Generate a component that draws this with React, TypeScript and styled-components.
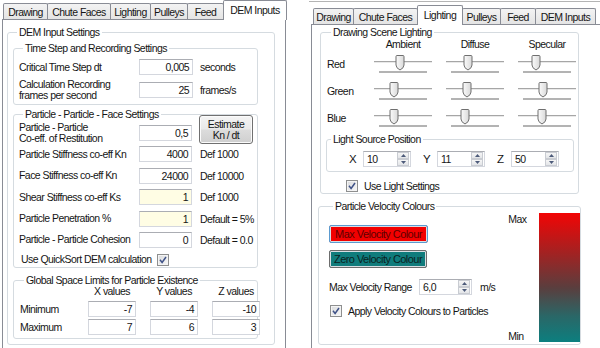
import React from 'react';
import styled, { createGlobalStyle } from 'styled-components';

const GlobalStyle = createGlobalStyle`
  html, body {
    margin: 0;
    padding: 0;
    background: #fff;
  }
  body {
    font-family: "Liberation Sans", Arial, sans-serif;
    font-size: 10.5px;
    letter-spacing: -0.55px;
    color: #151515;
  }
  * {
    box-sizing: border-box;
  }
`;

const Screen = styled.div`
  display: flex;
  align-items: flex-start;
  width: 600px;
  height: 348px;
  overflow: hidden;
  background: #fff;
`;

const LeftPane = styled.div`
  display: flex;
  flex-direction: column;
  width: 284px;
  height: 360px;
  margin-left: 2px;
`;

const RightPane = styled.div`
  display: flex;
  flex-direction: column;
  flex-shrink: 0;
  width: 294px;
  height: 360px;
  margin-top: 1px;
  margin-left: 23px;
  padding-left: 2px;
  border-top: 1px solid #b4b4b4;
`;

const TabStrip = styled.div<{ $h: number; $lead: number }>`
  display: flex;
  align-items: flex-end;
  height: ${p => p.$h}px;
  padding-left: ${p => p.$lead}px;
`;

const Tab = styled.div<{ $w: number; $active?: boolean }>`
  position: relative;
  z-index: ${p => (p.$active ? 1 : 0)};
  display: flex;
  align-items: center;
  justify-content: center;
  width: ${p => p.$w}px;
  height: ${p => (p.$active ? 20 : 16)}px;
  margin-right: -1px;
  margin-bottom: ${p => (p.$active ? -1 : 0)}px;
  padding-bottom: ${p => (p.$active ? 1 : 0)}px;
  border: 1px solid #898c95;
  border-bottom: none;
  border-radius: 2px 2px 0 0;
  background: ${p => (p.$active ? '#fff' : 'linear-gradient(#f3f3f3, #e4e4e4)')};
  white-space: nowrap;
`;

const TabPage = styled.div<{ $pad: string }>`
  flex: 1;
  padding: ${p => p.$pad};
  border: 1px solid #898c95;
  background: #fff;
`;

const Group = styled.fieldset<{ $w: number; $pad: string; $mt?: number; $ml?: number }>`
  width: ${p => p.$w}px;
  min-width: 0;
  margin: ${p => p.$mt ?? 0}px 0 0 ${p => p.$ml ?? 0}px;
  padding: ${p => p.$pad};
  border: 1px solid #d5dbe0;
  border-radius: 3px;
`;

const Legend = styled.legend`
  height: 12px;
  margin-left: 4px;
  padding: 0 2px;
  line-height: 12px;
  white-space: nowrap;
`;

const Stack = styled.div<{ $gap: number }>`
  display: flex;
  flex-direction: column;
  gap: ${p => p.$gap}px;
`;

const FieldRow = styled.div<{ $h: number; $label: number }>`
  display: grid;
  grid-template-columns: ${p => p.$label}px auto auto;
  align-items: center;
  justify-content: start;
  height: ${p => p.$h}px;
`;

const Label = styled.div<{ $indent?: number }>`
  padding-left: ${p => p.$indent ?? 0}px;
  line-height: 11px;
  white-space: nowrap;
`;

const Unit = styled.div<{ $gap: number }>`
  margin-left: ${p => p.$gap}px;
  white-space: nowrap;
`;

const Field = styled.div<{ $w: number; $tint?: boolean }>`
  display: flex;
  align-items: center;
  justify-content: flex-end;
  width: ${p => p.$w}px;
  height: 16px;
  padding-right: 3px;
  border: 1px solid #d4d7de;
  border-top-color: #abadb3;
  background: ${p => (p.$tint ? '#fffde4' : '#fff')};
`;

const PushButton = styled.div`
  display: flex;
  flex-direction: column;
  align-items: center;
  justify-content: center;
  align-self: start;
  width: 54px;
  height: 29px;
  margin: -6px 0 0 7px;
  border: 1px solid #707070;
  border-radius: 3px;
  background: linear-gradient(#f4f4f4 0%, #e9e9e9 48%, #dcdcdc 52%, #cfcfcf 100%);
  line-height: 11px;
  box-shadow: inset 0 0 0 1px #fbfbfb;
`;

const CheckRow = styled.div<{ $label: number }>`
  display: grid;
  grid-template-columns: ${p => p.$label}px auto;
  align-items: center;
  height: 13px;
`;

const CheckLine = styled.div<{ $indent: number; $mt: number }>`
  display: flex;
  align-items: center;
  gap: 6px;
  height: 13px;
  margin-top: ${p => p.$mt}px;
  padding-left: ${p => p.$indent}px;
  white-space: nowrap;
`;

const Box = styled.span`
  display: inline-flex;
  align-items: center;
  justify-content: center;
  width: 12px;
  height: 12px;
  border: 1px solid #8e8f8f;
  background: linear-gradient(135deg, #d9dadc, #f8f8f8);
  box-shadow: inset 0 0 0 1px #f4f4f4;
`;

const LimitsGrid = styled.div`
  display: grid;
  grid-template-columns: 54px 48px 48px 48px;
  grid-template-rows: 12px 16px 16px;
  column-gap: 14px;
  row-gap: 2px;
  align-items: center;
`;

const ColHead = styled.div`
  text-align: center;
  line-height: 12px;
  margin-bottom: 4px;
`;

const LightGrid = styled.div`
  display: grid;
  grid-template-columns: 33px 58px 58px 58px;
  grid-template-rows: 11px 21px 21px 21px;
  column-gap: 14px;
  row-gap: 6px;
  align-items: center;
`;

const LightHead = styled.div`
  line-height: 12px;
  text-align: center;
`;

const RowName = styled.div`
  margin-top: -3px;
`;

const AxisRow = styled.div`
  display: flex;
  align-items: center;
  gap: 12px;
  height: 16px;
  padding-left: 22px;
`;

const Axis = styled.div`
  display: flex;
  align-items: center;
`;

const AxisName = styled.span`
  width: 8px;
  margin-right: 6px;
  font-size: 11.5px;
`;

const Spin = styled.div<{ $w: number }>`
  display: flex;
  width: ${p => p.$w}px;
  height: 16px;
  border: 1px solid #d4d7de;
  border-top-color: #abadb3;
  background: #fff;
`;

const SpinText = styled.div`
  flex: 1;
  padding-left: 3px;
  line-height: 14px;
`;

const SpinButtons = styled.div`
  display: flex;
  flex-direction: column;
  width: 12px;
  margin: 0 1px 0 0;
`;

const SpinHalf = styled.div`
  display: flex;
  align-items: center;
  justify-content: center;
  flex: 1;
  border: 1px solid #c9ccd2;
  background: linear-gradient(#f6f6f6, #e3e5e8);
`;

const VelocityBody = styled.div`
  display: grid;
  grid-template-columns: 1fr auto 41px;
  column-gap: 13px;
  height: 130px;
`;

const VelocityControls = styled.div`
  display: flex;
  flex-direction: column;
  padding-top: 13px;
`;

const ColourButton = styled.div<{ $fill: string; $ink: string; $ring: string; $mt: number; $w: number }>`
  display: flex;
  align-items: center;
  justify-content: center;
  width: ${p => p.$w}px;
  height: 18px;
  margin-top: ${p => p.$mt}px;
  border: 1px solid ${p => p.$ring};
  border-radius: 2px;
  background: ${p => p.$fill};
  color: ${p => p.$ink};
  box-shadow: inset 0 0 0 1px #d8dde2;
  font-size: 11px;
  white-space: nowrap;
`;

const RangeRow = styled.div`
  display: flex;
  align-items: center;
  height: 16px;
  margin-top: 11px;
  white-space: nowrap;
`;

const RangeLabel = styled.div`
  width: 90px;
`;

const ScaleLabels = styled.div`
  display: flex;
  flex-direction: column;
  justify-content: space-between;
  padding: 1px 0 0;
  line-height: 12px;
`;

const ScaleBar = styled.div`
  margin-top: 1px;
  background: linear-gradient(#f20505 0%, #a52121 30%, #5a3e3e 58%, #2a6767 80%, #0c7f7f 100%);
`;

const Check = () => (
  <Box>
    <svg width="8" height="8" viewBox="0 0 8 8">
      <path d="M1 3.8 L3.1 6.4 L7 1" stroke="#3f5287" strokeWidth="1.5" fill="none" />
    </svg>
  </Box>
);

const Arrow = ({ up }: { up?: boolean }) => (
  <svg width="5" height="3" viewBox="0 0 5 3">
    <path d={up ? 'M0 3 L2.5 0 L5 3 Z' : 'M0 0 L2.5 3 L5 0 Z'} fill="#4d5b7a" />
  </svg>
);

const SpinBox = ({ value, w }: { value: string; w: number }) => (
  <Spin $w={w}>
    <SpinText>{value}</SpinText>
    <SpinButtons>
      <SpinHalf>
        <Arrow up />
      </SpinHalf>
      <SpinHalf>
        <Arrow />
      </SpinHalf>
    </SpinButtons>
  </Spin>
);

const Slider = ({ at }: { at: number }) => (
  <svg width="58" height="21" viewBox="0 0 58 21">
    <defs>
      <linearGradient id="thumb" x1="0" y1="0" x2="1" y2="0">
        <stop offset="0" stopColor="#fbfbfb" />
        <stop offset="1" stopColor="#d9d9d9" />
      </linearGradient>
    </defs>
    <line x1="0" y1="6.5" x2="58" y2="6.5" stroke="#a6a6a6" />
    <line x1="0" y1="7.5" x2="58" y2="7.5" stroke="#e9e9e9" />
    <rect x="5" y="16" width="48" height="2" fill="#b3b3b3" />
    <path
      transform={`translate(${at - 4.5} 0)`}
      d="M0.5 1.5 Q0.5 0.5 1.5 0.5 H7.5 Q8.5 0.5 8.5 1.5 V10 Q8.5 13 4.5 15 Q0.5 13 0.5 10 Z"
      fill="url(#thumb)"
      stroke="#6f6f6f"
    />
  </svg>
);

const leftTabs: [string, number][] = [
  ['Drawing', 45],
  ['Chute Faces', 64],
  ['Lighting', 41],
  ['Pulleys', 38],
  ['Feed', 37],
  ['DEM Inputs', 64],
];

const rightTabs: [string, number][] = [
  ['Drawing', 41],
  ['Chute Faces', 65],
  ['Lighting', 46],
  ['Pulleys', 39],
  ['Feed', 36],
  ['DEM Inputs', 61],
];

const particleRows = [
  { label: 'Particle Stiffness co-eff Kn', value: '4000', note: 'Def 1000' },
  { label: 'Face Stiffness co-eff Kn', value: '24000', note: 'Def 10000' },
  { label: 'Shear Stiffness co-eff Ks', value: '1', note: 'Def 1000', tint: true },
  { label: 'Particle Penetration %', value: '1', note: 'Default = 5%', tint: true },
  { label: 'Particle - Particle Cohesion', value: '0', note: 'Default = 0.0' },
];

const lightRows = [
  { name: 'Red', at: [26, 22, 18] },
  { name: 'Green', at: [20, 21, 25] },
  { name: 'Blue', at: [20, 19, 24] },
];

const Tabs = ({ items, active, h, lead }: { items: [string, number][]; active: string; h: number; lead: number }) => (
  <TabStrip $h={h} $lead={lead}>
    {items.map(([name, w]) => (
      <Tab key={name} $w={w} $active={name === active}>
        {name}
      </Tab>
    ))}
  </TabStrip>
);

const DemInputs = () => (
  <LeftPane>
    <Tabs items={leftTabs} active="DEM Inputs" h={19} lead={1} />
    <TabPage $pad="6px 0 0 4px">
      <Group $w={268} $pad="4px 0 5px 5px">
        <Legend>DEM Input Settings</Legend>
        <Group $w={245} $pad="5px 0 3px 5px">
          <Legend>Time Step and Recording Settings</Legend>
          <Stack $gap={4}>
            <FieldRow $h={16} $label={120}>
              <Label>Critical Time Step dt</Label>
              <Field $w={54}>0,005</Field>
              <Unit $gap={7}>seconds</Unit>
            </FieldRow>
            <FieldRow $h={22} $label={120}>
              <Label>
                Calculation Recording
                <br />
                frames per second
              </Label>
              <Field $w={54}>25</Field>
              <Unit $gap={7}>frames/s</Unit>
            </FieldRow>
          </Stack>
        </Group>

        <Group $w={245} $pad="1px 0 1px 5px" $mt={3}>
          <Legend>Particle - Particle - Face Settings</Legend>
          <Stack $gap={5.4}>
            <FieldRow $h={20} $label={120}>
              <Label>
                Particle - Particle
                <br />
                Co-eff. of Restitution
              </Label>
              <Field $w={53}>0,5</Field>
              <PushButton>
                <span>Estimate</span>
                <span>Kn / dt</span>
              </PushButton>
            </FieldRow>
            {particleRows.map(r => (
              <FieldRow key={r.label} $h={16} $label={120}>
                <Label>{r.label}</Label>
                <Field $w={53} $tint={r.tint}>
                  {r.value}
                </Field>
                <Unit $gap={8}>{r.note}</Unit>
              </FieldRow>
            ))}
            <CheckRow $label={138}>
              <Label $indent={2}>Use QuickSort DEM calculation</Label>
              <Check />
            </CheckRow>
          </Stack>
        </Group>

        <Group $w={245} $pad="1px 0 3px 6px" $mt={6}>
          <Legend>Global Space Limits for Particle Existence</Legend>
          <LimitsGrid>
            <span />
            <ColHead>X values</ColHead>
            <ColHead>Y values</ColHead>
            <ColHead>Z values</ColHead>
            <Label>Minimum</Label>
            <Field $w={48}>-7</Field>
            <Field $w={48}>-4</Field>
            <Field $w={48}>-10</Field>
            <Label>Maximum</Label>
            <Field $w={48}>7</Field>
            <Field $w={48}>6</Field>
            <Field $w={48}>3</Field>
          </LimitsGrid>
        </Group>
      </Group>
    </TabPage>
  </LeftPane>
);

const LightingPage = () => (
  <RightPane>
    <Tabs items={rightTabs} active="Lighting" h={22} lead={2} />
    <TabPage $pad="1px 0 0 8px">
      <Group $w={259} $pad="0 0 1px 6px">
        <Legend>Drawing Scene Lighting</Legend>
        <LightGrid>
          <span />
          <LightHead>Ambient</LightHead>
          <LightHead>Diffuse</LightHead>
          <LightHead>Specular</LightHead>
          {lightRows.map(row => (
            <React.Fragment key={row.name}>
              <RowName>{row.name}</RowName>
              {row.at.map((a, i) => (
                <Slider key={i} at={a} />
              ))}
            </React.Fragment>
          ))}
        </LightGrid>

        <Group $w={248} $pad="6px 0 4px 0" $mt={3} $ml={-1}>
          <Legend>Light Source Position</Legend>
          <AxisRow>
            <Axis>
              <AxisName>X</AxisName>
              <SpinBox value="10" w={48} />
            </Axis>
            <Axis>
              <AxisName>Y</AxisName>
              <SpinBox value="11" w={48} />
            </Axis>
            <Axis>
              <AxisName>Z</AxisName>
              <SpinBox value="50" w={48} />
            </Axis>
          </AxisRow>
        </Group>

        <CheckLine $indent={19} $mt={7}>
          <Check />
          <span>Use Light Settings</span>
        </CheckLine>
      </Group>

      <Group $w={263} $pad="0 4px 2px 10px" $mt={6} $ml={-2}>
        <Legend>Particle Velocity Colours</Legend>
        <VelocityBody>
          <VelocityControls>
            <ColourButton $fill="#f20000" $ink="#5e0000" $ring="#5b9bd0" $mt={0} $w={99}>
              Max Velocity Colour
            </ColourButton>
            <ColourButton $fill="#107c7c" $ink="#0b2222" $ring="#6d6d6d" $mt={7} $w={98}>
              Zero Velocity Colour
            </ColourButton>
            <RangeRow>
              <RangeLabel>Max Velocity Range</RangeLabel>
              <SpinBox value="6,0" w={53} />
              <Unit $gap={8}>m/s</Unit>
            </RangeRow>
            <CheckLine $indent={1} $mt={9}>
              <Check />
              <span>Apply Velocity Colours to Particles</span>
            </CheckLine>
          </VelocityControls>
          <ScaleLabels>
            <span>Max</span>
            <span>Min</span>
          </ScaleLabels>
          <ScaleBar />
        </VelocityBody>
      </Group>
    </TabPage>
  </RightPane>
);

export default function App() {
  return (
    <>
      <GlobalStyle />
      <Screen>
        <DemInputs />
        <LightingPage />
      </Screen>
    </>
  );
}
